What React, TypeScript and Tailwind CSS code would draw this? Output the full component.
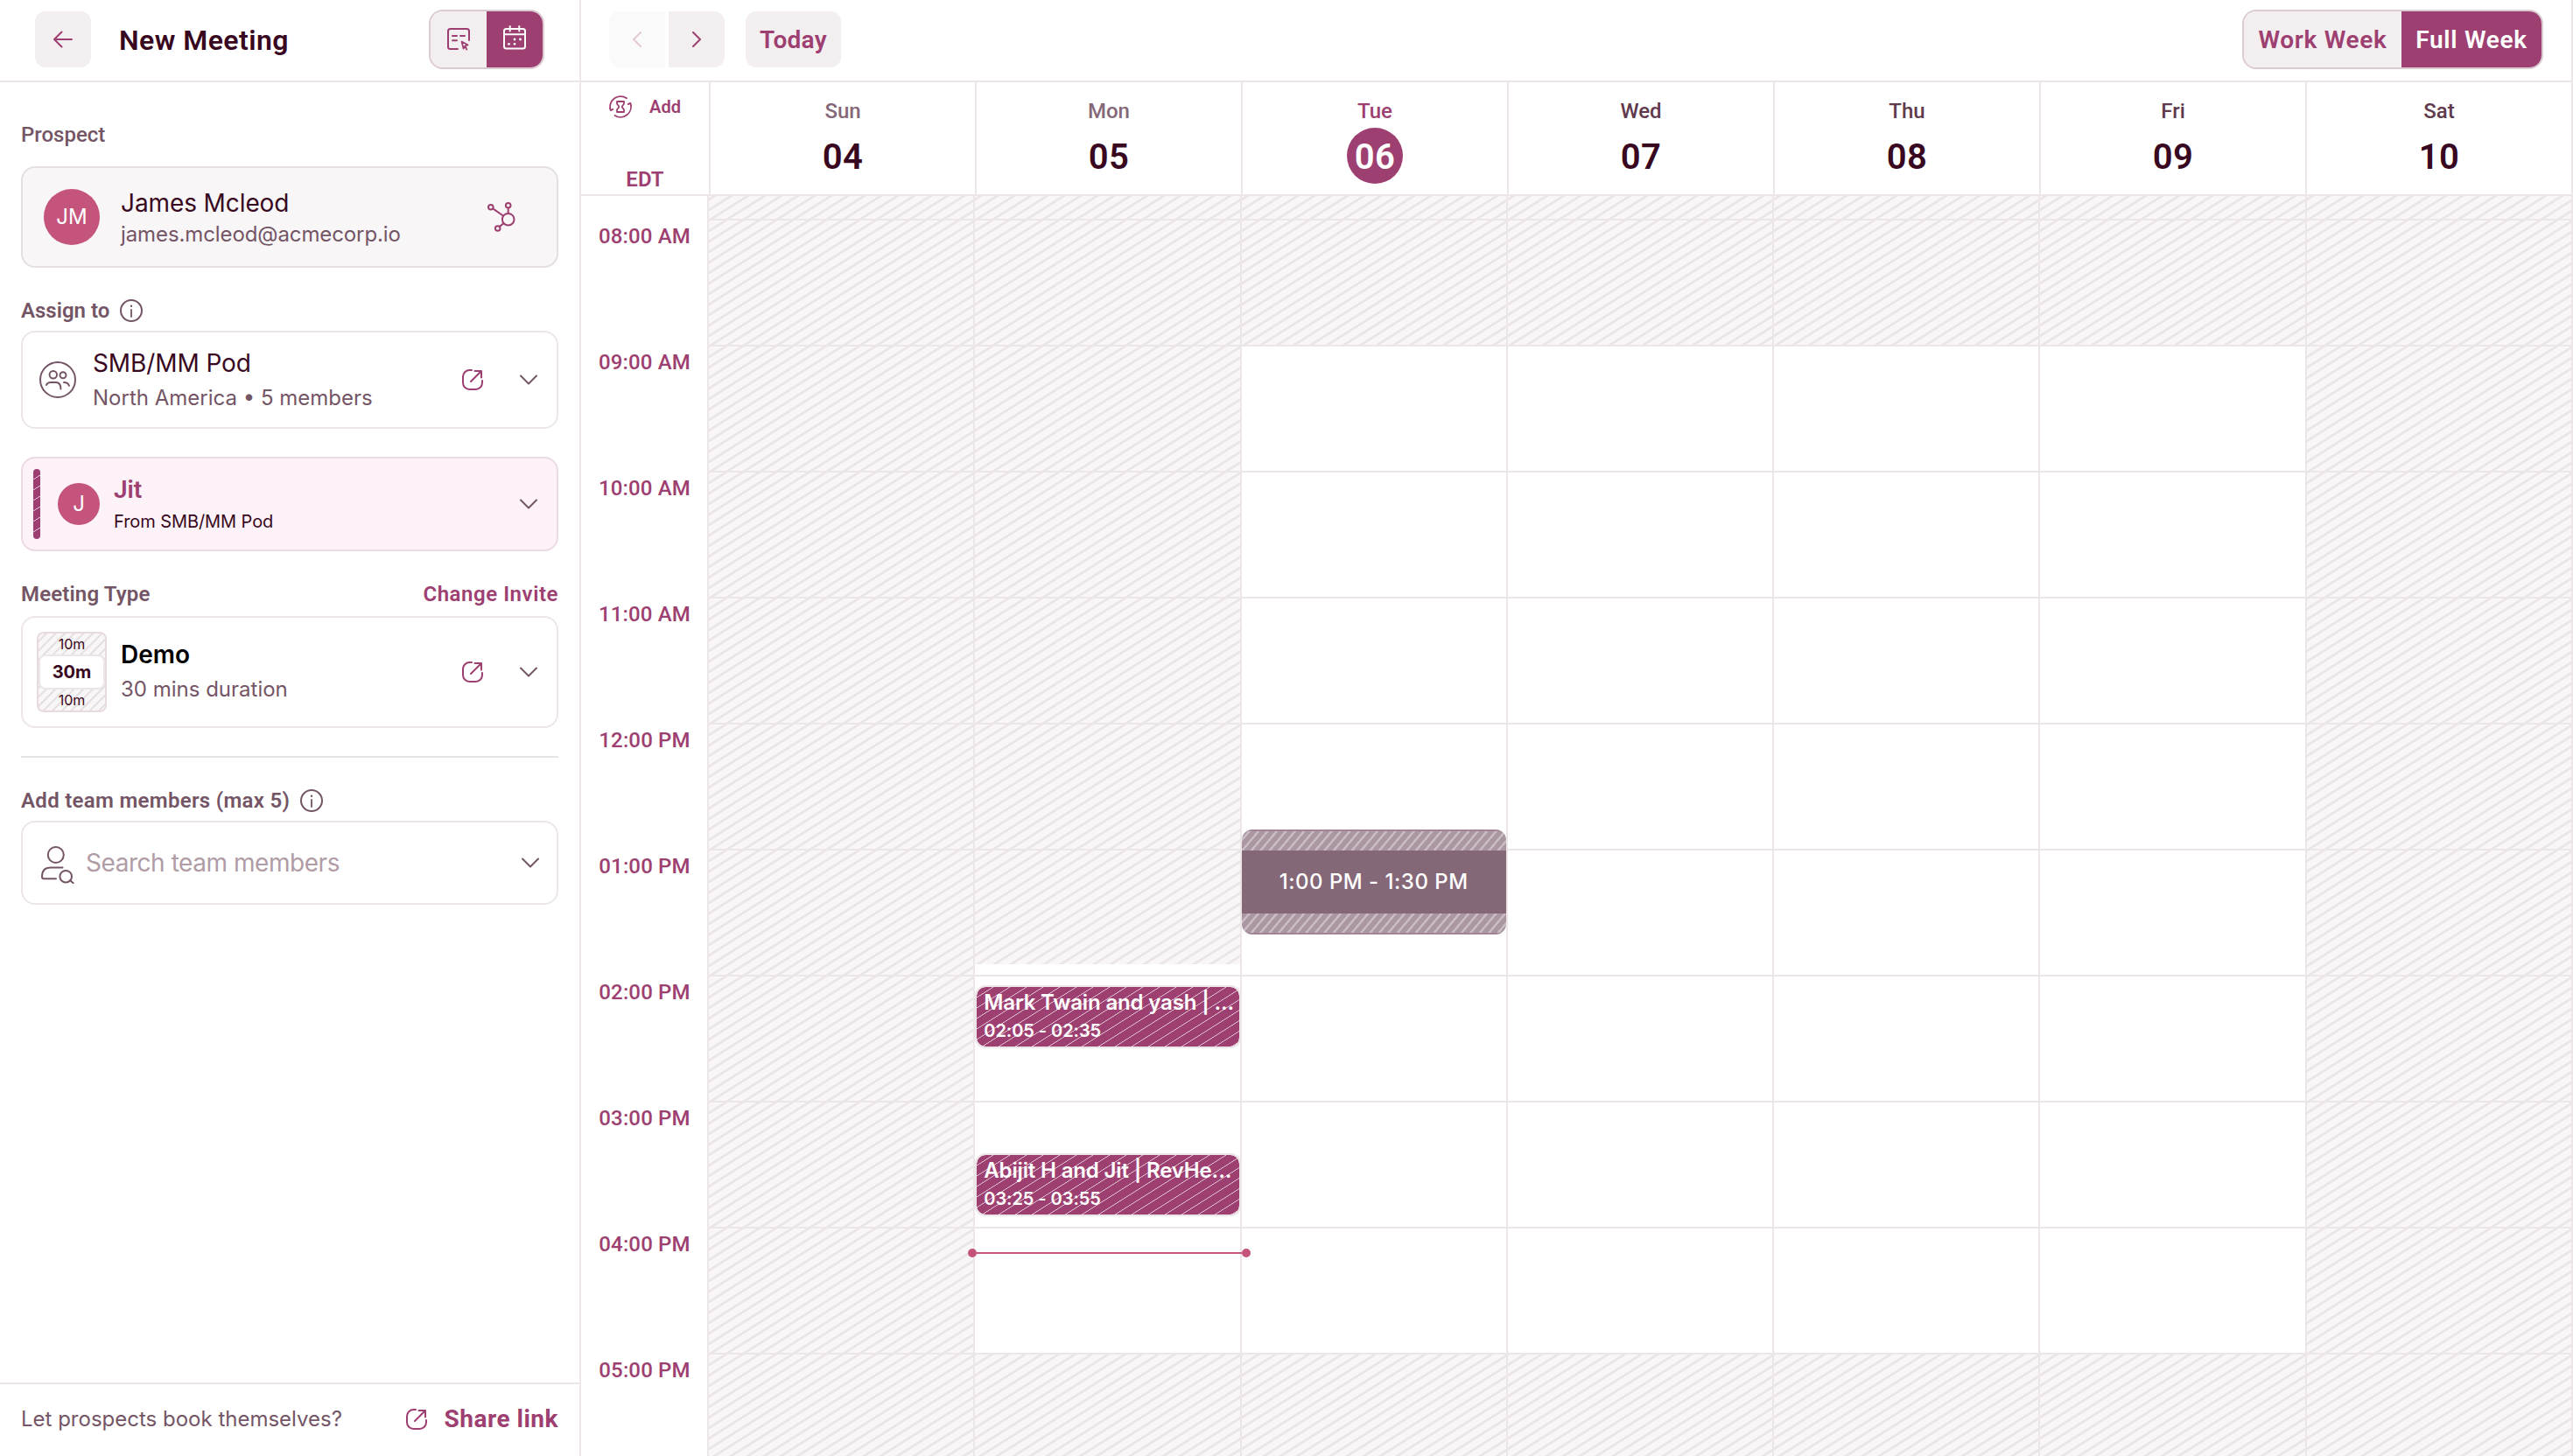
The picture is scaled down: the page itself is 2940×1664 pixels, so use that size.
import { ReactNode } from "react";
import clsx from "clsx";

const hatch =
  "bg-[linear-gradient(to_bottom_right,#ece5e8_6%,#f8f6f7_7.5%,#f8f6f7_42.5%,#ece5e8_44%,#ece5e8_56%,#f8f6f7_57.5%,#f8f6f7_92.5%,#ece5e8_94%)] bg-[length:19px_12px]";
const eventHatch =
  "bg-[#9d3f70] bg-[linear-gradient(to_bottom_right,transparent_47%,#e2c8d5_49%,#e2c8d5_51%,transparent_53%)] bg-[length:19px_12px]";
const slotHatch =
  "bg-[repeating-linear-gradient(130deg,#ab97a1_0px,#ab97a1_5px,#c9bcc4_5.5px,#c9bcc4_7.5px,#ab97a1_8px)]";

type Day = { name: string; date: string; state?: "past" | "today" };

const days: Day[] = [
  { name: "Sun", date: "04", state: "past" },
  { name: "Mon", date: "05", state: "past" },
  { name: "Tue", date: "06", state: "today" },
  { name: "Wed", date: "07" },
  { name: "Thu", date: "08" },
  { name: "Fri", date: "09" },
  { name: "Sat", date: "10" },
];

const hours = [
  "08:00 AM",
  "09:00 AM",
  "10:00 AM",
  "11:00 AM",
  "12:00 PM",
  "01:00 PM",
  "02:00 PM",
  "03:00 PM",
  "04:00 PM",
  "05:00 PM",
];

function ExternalIcon() {
  return (
    <svg width="24" height="24" viewBox="0 0 24 24" fill="none" stroke="#9d3f70" strokeWidth="2" strokeLinecap="round" strokeLinejoin="round">
      <path d="M11 1H8.5A7.5 7.5 0 0 0 1 8.500v7A7.500 7.500 0 0 0 8.500 23h7a7.500 7.500 0 0 0 7.500-7.500V13" />
      <path d="M10 14 21.500 2.500M14.500 2H22v7.500" />
    </svg>
  );
}

function ChevronDown() {
  return (
    <svg width="20" height="12" viewBox="0 0 20 12" fill="none" stroke="#745566" strokeWidth="2" strokeLinecap="round" strokeLinejoin="round">
      <path d="m1 1.500 9 9 9-9" />
    </svg>
  );
}

function InfoIcon() {
  return (
    <svg width="26" height="26" viewBox="0 0 26 26" fill="none" stroke="#745566" strokeWidth="2" strokeLinecap="round">
      <circle cx="13" cy="13" r="12" />
      <path d="M13 12v8" strokeWidth="1.800" />
      <circle cx="13" cy="7.800" r="1.200" fill="#745566" stroke="none" />
    </svg>
  );
}

function FormIcon() {
  return (
    <svg width="26" height="26" viewBox="0 0 26 26" fill="none" stroke="#9d3f70" strokeWidth="2" strokeLinecap="round" strokeLinejoin="round">
      <path d="M25 14V3.500Q25 1 22.500 1h-19Q1 1 1 3.500v18Q1 24 3.500 24H12M6 9h5M15 9h5M6 14.300h5" />
      <path d="m16.500 15.500 7 3.800-3.200 1.200-1.700 3zM20.500 21l1.800 3.500" strokeWidth="1.800" />
    </svg>
  );
}

function CalendarIcon() {
  return (
    <svg width="26" height="28" viewBox="0 0 26 28" fill="none" stroke="#fff" strokeWidth="2" strokeLinecap="round">
      <rect x="1" y="4" width="24" height="22.500" rx="2.500" />
      <path d="M1 10.300h24M7.700 1v5.500M18.300 1v5.500" />
      <g fill="#fff" stroke="none">
        <circle cx="13" cy="16" r="1.400" />
        <circle cx="19.500" cy="16" r="1.400" />
        <circle cx="6.500" cy="21.300" r="1.400" />
        <circle cx="13" cy="21.300" r="1.400" />
      </g>
    </svg>
  );
}

function HubspotIcon() {
  return (
    <svg width="32" height="34" viewBox="0 0 32 34" fill="none" stroke="#9d3f70" strokeWidth="2">
      <circle cx="23.700" cy="19.700" r="6.800" />
      <circle cx="3.800" cy="5.700" r="2.800" />
      <circle cx="23.700" cy="3.800" r="2.800" />
      <circle cx="11.700" cy="30" r="2.800" />
      <path d="m6.200 7.400 12 8.400M23.700 6.600v6.300M13.800 28l4.800-3.900" />
    </svg>
  );
}

function TeamIcon() {
  return (
    <svg width="42" height="42" viewBox="-21 -21 42 42" fill="none" stroke="#745566" strokeWidth="2" strokeLinecap="round">
      <circle r="20" />
      <circle cx="-5.200" cy="-5.700" r="4.200" />
      <circle cx="6" cy="-5.200" r="3.500" />
      <path d="M-13 6C-12 3.500-10 3-8 3h6C1.500 3 3.400 5 3.400 10.500M7 3c3.200 0 5 1.200 6 3.800" />
    </svg>
  );
}

function PersonSearchIcon() {
  return (
    <svg width="38" height="43" viewBox="0 0 38 43" fill="none" stroke="#745566" strokeWidth="2" strokeLinecap="round" strokeLinejoin="round">
      <circle cx="16.800" cy="10" r="9" />
      <path d="M24.500 24.600H11C5 24.600 1 28 1 35q0 2.200 2.200 2.200H17" />
      <circle cx="28.200" cy="34.700" r="6.800" />
      <path d="m33.200 39.200 3.500 3" />
    </svg>
  );
}

function BufferIcon() {
  return (
    <svg width="26" height="26" viewBox="0 0 26 26" fill="none" stroke="#9d3f70" strokeWidth="1.800" strokeLinecap="round" strokeLinejoin="round">
      <path d="M1.800 17A12 12 0 0 1 20 3.200M.9 14.500l.9 2.700 2.500-1.300" />
      <path d="M24.300 9A12 12 0 0 1 6.500 23M25.100 11.500l-.8-2.700-2.500 1.300" />
      <path d="M9 7h8v2.300c0 1.700-2.200 2-2.200 3.700s2.200 2 2.200 3.700V19H9v-2.300c0-1.700 2.200-2 2.200-3.700S9 11 9 9.300z" />
    </svg>
  );
}

function Label({ children, className }: { children: ReactNode; className?: string }) {
  return (
    <div className={clsx("flex h-7 items-center gap-3 font-[Roboto] text-2xl/7 text-[#745566]", className)}>
      {children}
    </div>
  );
}

function Card({ children, className }: { children: ReactNode; className?: string }) {
  return (
    <div className={clsx("flex items-center rounded-2xl border-2 pr-[22px]", className)}>
      {children}
    </div>
  );
}

function Sidebar() {
  return (
    <aside className="flex w-[664px] shrink-0 flex-col border-r-2 border-[#ece6e8]">
      <header className="flex h-[94px] items-center border-b-2 border-[#ece6e8] pr-10 pb-[2px] pl-10">
        <button className="flex size-16 items-center justify-center rounded-xl bg-[#f3eef0]">
          <svg width="22" height="20" viewBox="0 0 22 20" fill="none" stroke="#9d3f70" strokeWidth="2" strokeLinecap="round" strokeLinejoin="round">
            <path d="M21 10H1M9.500 1.500 1 10l8.500 8.500" />
          </svg>
        </button>
        <h1 className="ml-8 pt-0.5 font-[Roboto] text-[32px]/10 font-semibold tracking-[0.450px] text-[#380821]">
          New Meeting
        </h1>
        <div className="ml-auto flex h-[68px] w-[132px] overflow-hidden rounded-2xl border-2 border-[#dacbd2]">
          <div className="flex w-16 items-center justify-center bg-[#f3eef0]">
            <FormIcon />
          </div>
          <div className="flex w-16 items-center justify-center bg-[#9d3f70] pb-1">
            <CalendarIcon />
          </div>
        </div>
      </header>

      <div className="flex flex-col px-6">
        <Label className="mt-[46px] font-medium">Prospect</Label>
        <Card className="mt-[22px] h-[116px] border-[#e6dfe2] bg-[#f8f6f7] pl-6">
          <div className="flex size-16 items-center justify-center rounded-full bg-[#c5547c] text-2xl text-white">
            JM
          </div>
          <div className="ml-6 pt-[3px]">
            <p className="text-[28px]/9 tracking-[-0.100px] text-[#380821]">James Mcleod</p>
            <p className="text-2xl/9 tracking-[-0.100px] text-[#745566]">james.mcleod@acmecorp.io</p>
          </div>
          <div className="mr-[25px] ml-auto">
            <HubspotIcon />
          </div>
        </Card>

        <Label className="mt-[35px] font-semibold">
          Assign to <InfoIcon />
        </Label>
        <Card className="mt-[9px] h-28 border-[#ece6e8] pl-[19px]">
          <TeamIcon />
          <div className="ml-[19px] pt-[2px]">
            <p className="text-[28px]/10 tracking-[-0.100px] text-[#380821]">SMB/MM Pod</p>
            <p className="text-2xl/10 text-[#745566]">North America • 5 members</p>
          </div>
          <div className="ml-auto flex items-center gap-[42px]">
            <ExternalIcon />
            <ChevronDown />
          </div>
        </Card>

        <Card className="mt-8 h-[108px] border-[#ebdae4] bg-[#fcf2f8] pl-3">
          <div className={clsx("h-20 w-2 rounded-sm", eventHatch)} />
          <div className="ml-5 flex size-12 items-center justify-center rounded-full bg-[#c5547c] text-2xl text-white">
            J
          </div>
          <div className="ml-4 pt-1">
            <p className="font-[Roboto] text-[28px]/9 font-semibold text-[#9d3f70]">Jit</p>
            <p className="text-xl/9 tracking-[-0.080px] text-[#380821]">From SMB/MM Pod</p>
          </div>
          <div className="ml-auto">
            <ChevronDown />
          </div>
        </Card>

        <Label className="mt-[35px] mb-px justify-between font-semibold">
          <span className="tracking-[0.150px]">Meeting Type</span>
          <span className="tracking-[0.550px] text-[#9d3f70]">Change Invite</span>
        </Label>
        <Card className="mt-2.5 h-32 border-[#ece6e8] pl-4">
          <div className="flex h-[92px] w-20 flex-col overflow-hidden rounded-lg border-2 border-[#e6dbe0] bg-[repeating-linear-gradient(135deg,#f8f6f7_0px,#f8f6f7_5px,#e6dfe2_5.500px,#e6dfe2_7px,#f8f6f7_7.500px)] text-center text-[#380821]">
            <p className="text-base/6">10m</p>
            <p className="rounded-lg border-2 border-[#ece6e8] bg-white text-xl/9 font-bold">30m</p>
            <p className="text-base/6">10m</p>
          </div>
          <div className="ml-4">
            <p className="text-[28px]/10 font-semibold text-black">Demo</p>
            <p className="text-2xl/10 text-[#745566]">30 mins duration</p>
          </div>
          <div className="ml-auto flex items-center gap-[42px]">
            <ExternalIcon />
            <ChevronDown />
          </div>
        </Card>

        <div className="mt-8 h-0.5 bg-[#e6e3e8]" />

        <Label className="mt-[35px] font-semibold">
          <span className="tracking-[0.300px]">Add team members (max 5)</span>
          <InfoIcon />
        </Label>
        <Card className="mt-[9px] h-24 border-[#ece6e8] pl-[21px]">
          <div className="pt-1">
            <PersonSearchIcon />
          </div>
          <p className="ml-[13px] text-[28px]/10 tracking-[-0.450px] text-[#b09ca6]">Search team members</p>
          <div className="-mr-0.5 ml-auto">
            <ChevronDown />
          </div>
        </Card>
      </div>

      <footer className="mt-auto flex h-[84px] items-center border-t-2 border-[#ece6e8] px-6 pb-[2px]">
        <p className="text-2xl text-[#745566]">Let prospects book themselves?</p>
        <a className="ml-auto flex items-center gap-5 font-[Roboto] text-[28px] font-bold tracking-[0.500px] text-[#9d3f70]">
          <ExternalIcon />
          Share link
        </a>
      </footer>
    </aside>
  );
}

function Toolbar() {
  return (
    <div className="flex h-[94px] items-center border-r-2 border-b-2 border-[#ece6e8] pr-8 pb-[2px] pl-8 font-[Roboto] text-[28px] font-semibold text-[#9d3f70]">
      <div className="flex gap-1">
        <button className="flex size-16 items-center justify-center rounded-l-xl bg-[#fafafa]">
          <svg width="10" height="18" viewBox="0 0 10 18" fill="none" stroke="#e3c9d6" strokeWidth="2" strokeLinecap="round" strokeLinejoin="round">
            <path d="M9 1 1 9l8 8" />
          </svg>
        </button>
        <button className="flex size-16 items-center justify-center rounded-r-xl bg-[#f3eef0]">
          <svg width="10" height="18" viewBox="0 0 10 18" fill="none" stroke="#9d3f70" strokeWidth="2" strokeLinecap="round" strokeLinejoin="round">
            <path d="m1 1 8 8-8 8" />
          </svg>
        </button>
      </div>
      <button className="ml-6 h-16 w-[109px] rounded-xl bg-[#f3eef0] pt-0.5 tracking-[0.300px]">Today</button>
      <div className="ml-auto flex h-[68px] overflow-hidden rounded-2xl border-2 border-[#dacbd2] tracking-[0.700px]">
        <button className="w-[180px] bg-[#f3eef0] pt-0.5">Work Week</button>
        <button className="w-40 bg-[#9d3f70] pt-0.5 text-white">Full Week</button>
      </div>
    </div>
  );
}

function WeekHeader() {
  return (
    <div className="flex h-[130px] border-b-2 border-[#ece6e8] font-[Roboto]">
      <div className="flex w-[148px] flex-col items-center border-r-2 border-[#ece6e8] pt-3.5 font-semibold text-[#9d3f70]">
        <div className="flex h-7 items-center gap-5 text-xl">
          <BufferIcon />
          Add
        </div>
        <span className="mt-[55px] text-2xl/7">EDT</span>
      </div>
      {days.map((day) => (
        <div key={day.date} className="flex w-[304px] flex-col items-center border-r-2 border-[#ece6e8] pt-[17px]">
          <span
            className={clsx(
              "text-2xl/8 font-medium",
              day.state === "past" && "text-[#856878]",
              day.state === "today" && "text-[#9d3f70]",
              !day.state && "text-[#5f3a4c]",
            )}
          >
            {day.name}
          </span>
          <span
            className={clsx(
              "mt-[3px] flex size-16 items-center justify-center rounded-full pt-1 text-[40px] font-semibold tracking-[0.500px]",
              day.state === "today" ? "bg-[#9d3f70] text-white" : "text-[#380821]",
            )}
          >
            {day.date}
          </span>
        </div>
      ))}
    </div>
  );
}

function Event({ title, time, className }: { title: string; time: string; className: string }) {
  return (
    <div
      className={clsx(
        "absolute -right-px left-0 h-[72px] rounded-xl border-2 border-[#ece6e8] bg-clip-padding px-2 font-semibold whitespace-nowrap text-white",
        eventHatch,
        className,
      )}
    >
      <p className="text-2xl/9 tracking-[-0.150px]">{title}</p>
      <p className="text-xl/7 tracking-[-0.050px]">{time}</p>
    </div>
  );
}

// busy hours of a day, as they are shaded in the grid
function isBusy(day: Day, hour: number) {
  if (day.name === "Sun" || day.name === "Sat") return true;
  if (hour === 0 || hour === 9) return true;
  return day.name === "Mon" && hour < 5;
}

function DayColumn({ day }: { day: Day }) {
  return (
    <div className="relative flex-1 border-r-2 border-[#ece6e8]">
      <div className={clsx("h-[26px] bg-[position:0_4px]", hatch)} />
      {hours.map((hour, i) => (
        <div key={hour} className={clsx("h-36 border-t-2 border-[#ece6e8]", isBusy(day, i) && hatch)}>
          {day.name === "Mon" && i === 5 && <div className={clsx("h-[130px]", hatch)} />}
        </div>
      ))}
      {day.name === "Mon" && (
        <>
          <Event className="top-[902px]" title="Mark Twain and yash | ..." time="02:05 - 02:35" />
          <Event className="top-[1094px]" title="Abijit H and Jit | RevHe..." time="03:25 - 03:55" />
          <div className="absolute top-[1203px] -right-3 -left-2 z-10 flex h-2.5 items-center text-[#c5547c]">
            <span className="size-2.5 rounded-full bg-current" />
            <span className="h-0.5 flex-1 bg-current" />
            <span className="size-2.5 rounded-full bg-current" />
          </div>
        </>
      )}
      {day.name === "Tue" && (
        <div className="absolute inset-x-0 top-[724px] flex h-[120px] flex-col overflow-hidden rounded-xl text-white">
          <div className={clsx("h-6 border-t-2 border-[#a08592]", slotHatch)} />
          <div className="flex flex-1 items-center justify-center bg-[#856878] text-2xl font-medium tracking-[0.500px]">
            1:00 PM - 1:30 PM
          </div>
          <div className={clsx("h-6 border-b-2 border-[#a08592]", slotHatch)} />
        </div>
      )}
    </div>
  );
}

export default function App() {
  return (
    <div className="flex h-[1664px] w-[2940px] overflow-hidden bg-white font-[Inter]">
      <Sidebar />
      <main className="flex min-w-0 flex-1 flex-col">
        <Toolbar />
        <WeekHeader />
        <div className="flex min-h-0 flex-1 overflow-hidden">
          <div className="flex w-[146px] flex-col border-r-2 border-[#ece6e8] pt-[26px] pl-px text-center font-[Roboto] text-2xl/7 font-medium tracking-[0.150px] text-[#9d3f70]">
            {hours.map((hour) => (
              <div key={hour} className="h-36 shrink-0 pt-1.5">
                {hour}
              </div>
            ))}
          </div>
          {days.map((day) => (
            <DayColumn key={day.date} day={day} />
          ))}
        </div>
      </main>
    </div>
  );
}
